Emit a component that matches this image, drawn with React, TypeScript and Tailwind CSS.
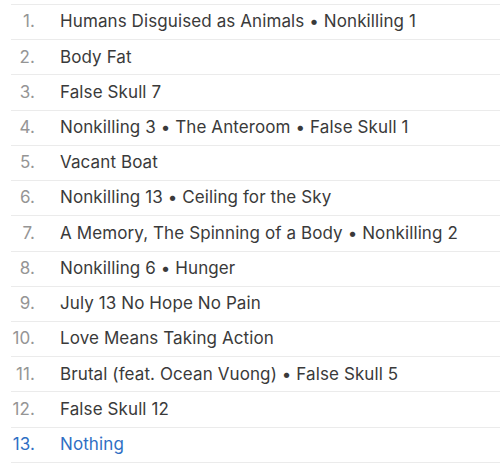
import React from "react";

const tracks = [
  "Humans Disguised as Animals • Nonkilling 1",
  "Body Fat",
  "False Skull 7",
  "Nonkilling 3 • The Anteroom • False Skull 1",
  "Vacant Boat",
  "Nonkilling 13 • Ceiling for the Sky",
  "A Memory, The Spinning of a Body • Nonkilling 2",
  "Nonkilling 6 • Hunger",
  "July 13 No Hope No Pain",
  "Love Means Taking Action",
  "Brutal (feat. Ocean Vuong) • False Skull 5",
  "False Skull 12",
  "Nothing",
];

export default function App() {
  return (
    <div
      className="w-[500px] h-[467px] bg-white pt-[4px] overflow-hidden"
      style={{ fontFamily: 'Inter, "Liberation Sans", Arial, sans-serif' }}
    >
      <div className="ml-[11px] border-t border-[#ebebeb]">
        {tracks.map((t, i) => {
          const active = i === tracks.length - 1;
          return (
            <div
              key={i}
              className="h-[35.23px] flex items-center border-b border-[#ebebeb] text-[17px] tracking-[0.1px]"
            >
              <span
                className={`w-[24px] text-right ${active ? "text-[#2f6fc4]" : "text-[#959595]"}`}
              >
                {i + 1}.
              </span>
              <span
                className={`ml-[25px] ${active ? "text-[#2f6fc4]" : "text-[#3a3a3a]"}`}
              >
                {t}
              </span>
            </div>
          );
        })}
      </div>
    </div>
  );
}
